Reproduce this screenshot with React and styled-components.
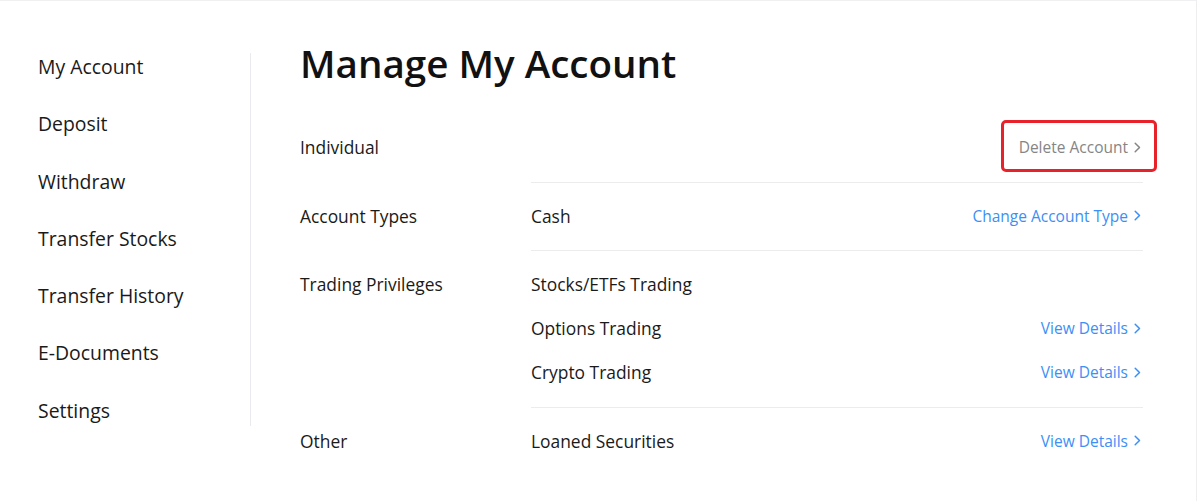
import React from 'react';
import styled, { createGlobalStyle } from 'styled-components';

const GlobalStyle = createGlobalStyle`
  body {
    margin: 0;
    background: #fff;
    font-family: "Open Sans", "Liberation Sans", sans-serif;
    color: #1a1a1a;
  }
`;

const Page = styled.div`
  box-sizing: border-box;
  width: 1197px;
  height: 501px;
  border-top: 1px solid #f0f0f2;
  border-right: 1px solid #eeeef0;
  display: flex;
  padding: 34px 53px 0 38px;
`;

const Sidebar = styled.nav`
  position: relative;
  width: 213px;
  margin-top: 3px;
  align-self: flex-start;

  &::after {
    content: '';
    position: absolute;
    right: 0;
    top: 15px;
    bottom: 13px;
    width: 1px;
    background: #e9e9ef;
  }
`;

const NavItem = styled.div`
  height: 57.3px;
  line-height: 57.3px;
  font-size: 19.4px;
  color: #1a1a1a;
  cursor: pointer;
`;

const Main = styled.main`
  flex: 1;
  padding-left: 49px;
`;

const Title = styled.h1`
  margin: 0 0 23px;
  font-size: 38.6px;
  line-height: 56px;
  font-weight: 600;
  color: #111;
`;

const Section = styled.section`
  display: grid;
  grid-template-columns: 231px 1fr;
`;

const Label = styled.div`
  padding-top: 11px;
  height: 44px;
  line-height: 44px;
  font-size: 17.4px;
`;

const Values = styled.div`
  padding: 11px 0 12.5px;
  border-bottom: ${(p) => (p.$last ? 'none' : '1px solid #ececec')};
`;

const Item = styled.div`
  display: flex;
  align-items: center;
  justify-content: space-between;
  height: 44px;
  font-size: 17.4px;
`;

const Link = styled.a`
  display: inline-flex;
  align-items: center;
  gap: 6px;
  font-size: 15.5px;
  line-height: 20px;
  margin-right: 2px;
  color: ${(p) => (p.$muted ? '#858585' : '#3b8ff6')};
  text-decoration: none;
  cursor: pointer;
`;

const Highlight = styled.span`
  position: relative;
  display: inline-flex;

  &::after {
    content: '';
    position: absolute;
    top: -17px;
    bottom: -15px;
    left: -18px;
    right: -14px;
    border: 3px solid #e8222a;
    border-radius: 5px;
    pointer-events: none;
  }
`;

const Chevron = () => (
  <svg width="7" height="11" viewBox="0 0 7 11" fill="none">
    <path d="M1.2 1.2L5.5 5.5L1.2 9.8" stroke="currentColor" strokeWidth="1.5" strokeLinecap="round" strokeLinejoin="round" />
  </svg>
);

const navItems = [
  'My Account',
  'Deposit',
  'Withdraw',
  'Transfer Stocks',
  'Transfer History',
  'E-Documents',
  'Settings',
];

const sections = [
  {
    label: 'Account Types',
    items: [{ name: 'Cash', link: 'Change Account Type' }],
  },
  {
    label: 'Trading Privileges',
    items: [
      { name: 'Stocks/ETFs Trading' },
      { name: 'Options Trading', link: 'View Details' },
      { name: 'Crypto Trading', link: 'View Details' },
    ],
  },
  {
    label: 'Other',
    items: [{ name: 'Loaned Securities', link: 'View Details' }],
  },
];

const App = () => {
  return (
    <>
      <GlobalStyle />
      <Page>
        <Sidebar>
          {navItems.map((item) => (
            <NavItem key={item}>{item}</NavItem>
          ))}
        </Sidebar>
        <Main>
          <Title>Manage My Account</Title>
          <Section>
            <Label>Individual</Label>
            <Values>
              <Item>
                <span />
                <Highlight>
                  <Link $muted>
                    Delete Account <Chevron />
                  </Link>
                </Highlight>
              </Item>
            </Values>
          </Section>
          {sections.map((section, i) => (
            <Section key={section.label}>
              <Label>{section.label}</Label>
              <Values $last={i === sections.length - 1}>
                {section.items.map((item) => (
                  <Item key={item.name}>
                    <span>{item.name}</span>
                    {item.link && (
                      <Link>
                        {item.link} <Chevron />
                      </Link>
                    )}
                  </Item>
                ))}
              </Values>
            </Section>
          ))}
        </Main>
      </Page>
    </>
  );
};

export default App;
